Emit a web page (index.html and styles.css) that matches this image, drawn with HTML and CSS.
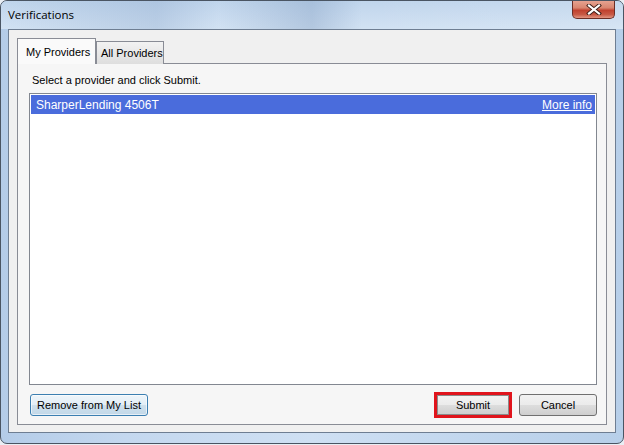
FILE: index.html
```html
<!DOCTYPE html>
<html>
<head>
<meta charset="utf-8">
<link rel="stylesheet" href="styles.css">
</head>
<body>
<div class="window">
  <div class="titlebar">
    <span class="title">Verifications</span>
    <div class="close">
      <svg width="16" height="11" viewBox="0 0 16 11"><path d="M3 1.5 L13 9.5 M13 1.5 L3 9.5" stroke="#3a1a14" stroke-width="4" stroke-linecap="square"/><path d="M3 1.5 L13 9.5 M13 1.5 L3 9.5" stroke="#ffffff" stroke-width="2.2" stroke-linecap="square"/></svg>
    </div>
  </div>
  <div class="client">
    <div class="tabs">
      <div class="tab active">My Providers</div>
      <div class="tab">All Providers</div>
    </div>
    <div class="panel">
      <div class="hint">Select a provider and click Submit.</div>
      <div class="list">
        <div class="row selected">
          <span>SharperLending 4506T</span>
          <span class="more">More info</span>
        </div>
      </div>
      <div class="actions">
        <button class="btn remove">Remove from My List</button>
        <div class="spacer"></div>
        <div class="highlight"><button class="btn submit">Submit</button></div>
        <button class="btn cancel">Cancel</button>
      </div>
    </div>
  </div>
</div>
</body>
</html>
```
FILE: styles.css
```css
html, body {
  margin: 0;
  padding: 0;
  background: #e9eef4;
}
body {
  width: 624px;
  height: 445px;
  overflow: hidden;
  font-family: "Liberation Sans", Arial, sans-serif;
  font-size: 11px;
  color: #000;
}
.window {
  box-sizing: border-box;
  width: 624px;
  height: 444px;
  border: 1px solid #4a5563;
  border-radius: 7px;
  background: linear-gradient(to right, #b4cce8 0%, #c4d8ef 20%, #cfe0f3 50%, #c2d7ee 75%, #b7cfe9 100%);
  display: flex;
  flex-direction: column;
}
.titlebar {
  height: 28px;
  display: flex;
  align-items: flex-start;
  padding-left: 7px;
  background:
    linear-gradient(to right, rgba(255,255,255,0) 0%, rgba(120,150,190,0.25) 25%, rgba(255,255,255,0) 35%, rgba(110,140,180,0.3) 50%, rgba(255,255,255,0) 58%, rgba(255,255,255,0.1) 100%),
    linear-gradient(to bottom, #c0d5ec, #d2e2f3);
  border-radius: 6px 6px 0 0;
}
.title {
  font-family: "Open Sans", "Liberation Sans", sans-serif;
  font-size: 11.5px;
  margin-top: 6px;
  color: #000;
}
.close {
  margin-left: auto;
  margin-right: 8px;
  width: 43px;
  height: 18px;
  box-sizing: border-box;
  border: 1px solid #6b2e26;
  border-top: none;
  border-radius: 0 0 5px 5px;
  background: linear-gradient(to bottom, #e6a290 0%, #d98670 40%, #c0412f 55%, #c85a46 80%, #e29582 100%);
  display: flex;
  align-items: center;
  justify-content: center;
}
.client {
  margin: 0 7px;
  height: 404px;
  box-sizing: border-box;
  border: 1px solid #6e7e92;
  background: #f0f0f0;
  padding: 8px 8px 7px 8px;
  display: flex;
  flex-direction: column;
}
.tabs {
  display: flex;
  align-items: flex-end;
  height: 26px;
  position: relative;
  z-index: 1;
  margin-bottom: -1px;
}
.tab {
  box-sizing: border-box;
  height: 23px;
  border: 1px solid #898c95;
  border-bottom: none;
  background: linear-gradient(to bottom, #f2f2f2, #dedede);
  padding: 5px 0 0 4px;
  width: 68px;
  white-space: nowrap;
  font-size: 11px;
}
.tab.active {
  height: 26px;
  width: 79px;
  background: #fafafa;
  padding: 7px 0 0 8px;
  font-size: 11px;
}
.panel {
  box-sizing: border-box;
  height: 363px;
  border: 1px solid #898c95;
  background: #f6f6f6;
  padding: 8px 9px 8px 11px;
  display: flex;
  flex-direction: column;
}
.hint {
  height: 16px;
  line-height: 16px;
  padding-left: 3px;
  margin-bottom: 5px;
}
.list {
  box-sizing: border-box;
  height: 292px;
  border: 1px solid #828790;
  background: #fff;
  padding: 1px;
}
.row {
  height: 19px;
  display: flex;
  align-items: center;
  justify-content: space-between;
  padding: 0 3px 0 5px;
  font-size: 12px;
}
.row.selected {
  background: #4a6cdc;
  color: #fff;
}
.more {
  text-decoration: underline;
}
.actions {
  display: flex;
  align-items: center;
  margin-top: 9px;
  height: 22px;
}
.spacer {
  flex: 1;
}
.btn {
  box-sizing: border-box;
  height: 22px;
  font-family: "Liberation Sans", Arial, sans-serif;
  font-size: 11px;
  color: #000;
  border: 1px solid #707070;
  border-radius: 3px;
  background: linear-gradient(to bottom, #f2f2f2 0%, #ebebeb 50%, #dddddd 51%, #cfcfcf 100%);
  padding: 0;
}
.remove {
  width: 118px;
  margin-left: 1px;
  border-color: #3c7fb1;
  background: linear-gradient(to bottom, #eef5fa 0%, #e3eef6 50%, #cfe0ec 51%, #c2d8e8 100%);
  box-shadow: inset 0 0 0 1px rgba(255,255,255,0.6);
}
.highlight {
  box-sizing: border-box;
  width: 78px;
  height: 26px;
  border: 3px solid #e0141c;
  margin: -2px 0;
  display: flex;
}
.submit {
  width: 72px;
  height: 20px;
  border-radius: 0;
  border-color: #8a8a8a;
}
.cancel {
  width: 78px;
  margin-left: 7px;
}
```
